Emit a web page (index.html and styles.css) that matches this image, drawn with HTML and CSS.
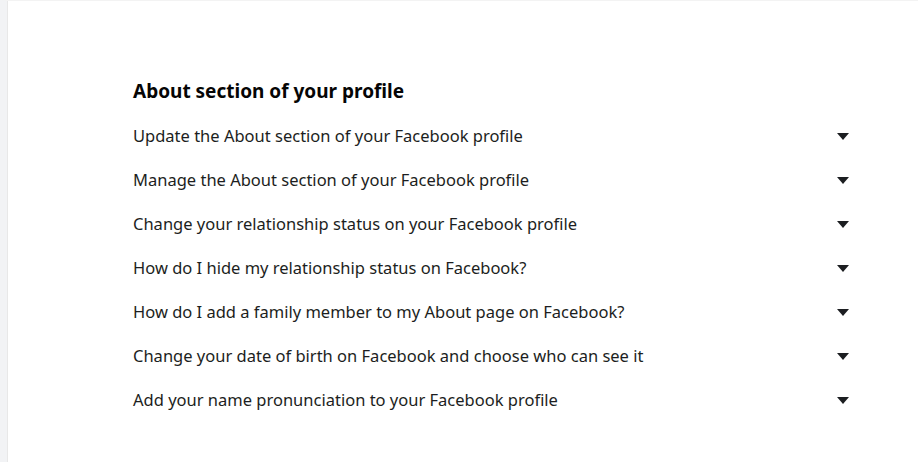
FILE: index.html
```html
<!DOCTYPE html>
<html>
<head>
<meta charset="utf-8">
<link rel="stylesheet" href="styles.css">
</head>
<body>
<div class="page">
  <section class="section">
    <h2 class="title">About section of your profile</h2>
    <ul class="list">
      <li class="item"><span class="label">Update the About section of your Facebook profile</span><span class="caret"></span></li>
      <li class="item"><span class="label">Manage the About section of your Facebook profile</span><span class="caret"></span></li>
      <li class="item"><span class="label">Change your relationship status on your Facebook profile</span><span class="caret"></span></li>
      <li class="item"><span class="label">How do I hide my relationship status on Facebook?</span><span class="caret"></span></li>
      <li class="item"><span class="label">How do I add a family member to my About page on Facebook?</span><span class="caret"></span></li>
      <li class="item"><span class="label">Change your date of birth on Facebook and choose who can see it</span><span class="caret"></span></li>
      <li class="item"><span class="label">Add your name pronunciation to your Facebook profile</span><span class="caret"></span></li>
    </ul>
  </section>
</div>
</body>
</html>
```
FILE: styles.css
```css
html, body {
  margin: 0;
  padding: 0;
  background: #ffffff;
}
body {
  font-family: "Noto Sans", "Open Sans", sans-serif;
  color: #1c1e21;
}
.page {
  height: 462px;
  box-sizing: border-box;
  border-top: 1px solid #f3f3f3;
  border-left: 7px solid #f2f3f5;
  box-shadow: inset 1px 0 0 #e8e8e8;
  padding: 77px 69px 0 126px;
}
.title {
  margin: 0 0 10px 0;
  font-size: 19px;
  font-weight: 700;
  color: #050505;
  line-height: 26px;
}
.list {
  list-style: none;
  margin: 0;
  padding: 0;
}
.item {
  display: flex;
  align-items: center;
  justify-content: space-between;
  height: 44px;
}
.label {
  font-size: 16.5px;
  color: #1c1e21;
  margin-bottom: 2px;
}
.caret {
  width: 0;
  height: 0;
  border-left: 6px solid transparent;
  border-right: 6px solid transparent;
  border-top: 7px solid #1c1e21;
}
```
